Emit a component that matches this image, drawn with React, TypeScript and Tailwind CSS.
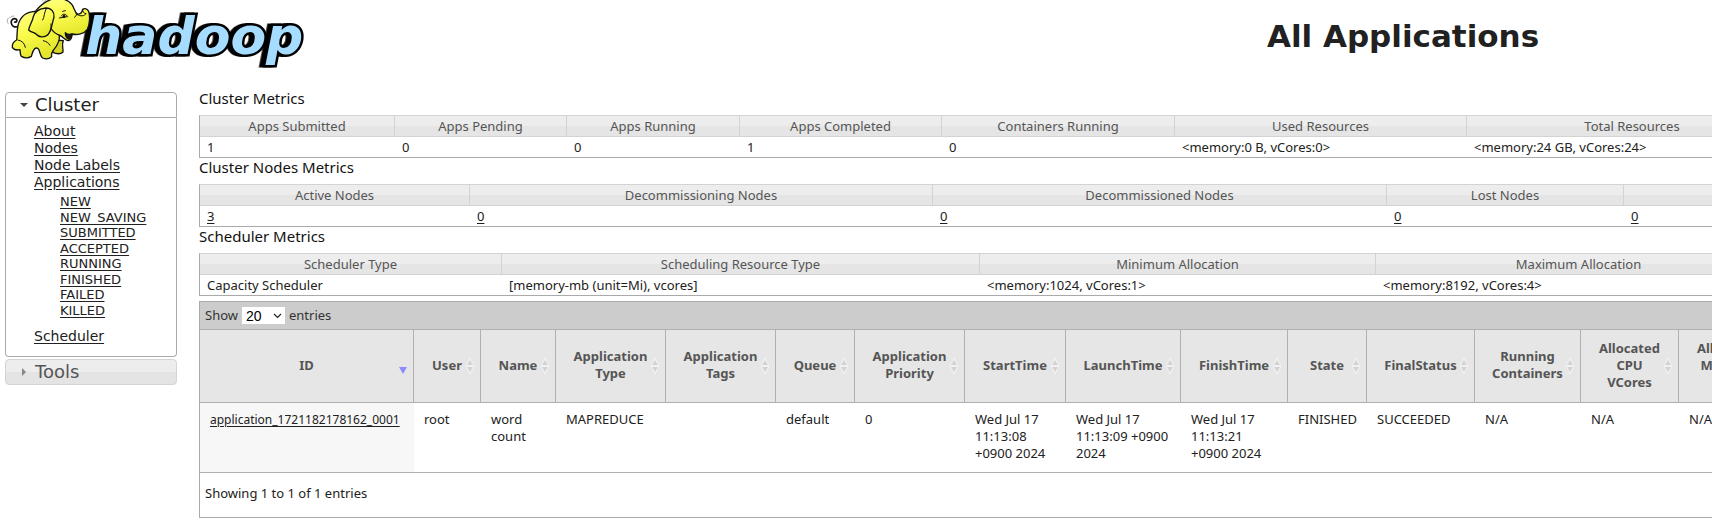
import type { ReactNode } from "react";

const BODY_FONT = "font-['Noto_Sans','Noto_Sans_CJK_KR',sans-serif]";
const NAV_FONT = "font-['DejaVu_Sans',sans-serif]";

function HadoopLogo() {
  return (
    <svg viewBox="0 0 930 210" className="h-[70px] w-[310px] shrink-0" role="img" aria-label="Hadoop">
      <defs>
        <linearGradient id="hide" x1="0" y1="0" x2="0.4" y2="1">
          <stop offset="0" stopColor="#ffff8a" />
          <stop offset="0.5" stopColor="#fbfb4e" />
          <stop offset="1" stopColor="#e3e62a" />
        </linearGradient>
      </defs>
      <text
        x="256"
        y="162"
        fill="#a5dcff"
        stroke="#000"
        strokeWidth="15"
        strokeLinejoin="miter"
        paintOrder="stroke"
        fontFamily="'DejaVu Sans', sans-serif"
        fontSize="156"
        fontWeight="700"
        fontStyle="italic"
        className="drop-shadow-[-11px_0_0_#000]"
      >
        hadoop
      </text>
      <g fill="url(#hide)" stroke="#111" strokeWidth="4" strokeLinejoin="round" strokeLinecap="round">
        <path d="M56 78C46 84 36 80 34 70C32 60 40 53 48 57C53 60 50 68 44 66" fill="none" strokeWidth="5" />
        <path d="M162 120L190 122C184 134 190 144 189 156C182 163 170 162 158 157Z" fill="#d3d424" />
        <path d="M104 34C78 36 60 52 54 76C50 94 52 108 50 120C42 124 36 132 37 142C42 150 52 151 60 149C61 158 60 164 64 169C73 174 86 174 94 169C97 160 98 152 104 146C110 142 114 144 117 150C121 162 122 170 128 174C137 178 148 176 155 170C153 162 157 154 162 148C172 136 180 124 178 106C172 66 140 36 104 34Z" />
        <path d="M108 32C122 14 140 2 160 -4C184 -8 206 0 216 14C222 22 224 36 232 42C240 44 246 38 248 28C254 24 262 26 266 34C270 48 270 72 262 88C252 102 232 106 216 102C216 112 212 121 204 122C196 120 190 112 180 106C166 102 158 94 152 84" />
        <path d="M196 98C202 104 210 104 216 102C215 112 211 118 205 117C199 113 196 106 196 98Z" fill="#1b1b12" />
        <path d="M138 24C116 26 104 36 100 50C98 64 88 76 86 90C94 98 102 96 108 102C116 112 132 114 144 104C156 90 156 68 162 52C164 36 154 24 138 24Z" />
        <path d="M138 28C132 38 134 50 128 60M142 104C152 98 154 86 153 72M54 120C66 122 74 130 76 142M130 122C138 124 146 128 150 136M248 28C247 36 252 40 258 41M228 42C238 48 248 50 256 44" fill="none" strokeWidth="3" />
        <path d="M184 48C188 40 196 41 202 48M178 54L202 50M188 34L196 32M224 52L230 44" fill="none" strokeWidth="3" />
        <ellipse cx="192" cy="49" rx="4" ry="5" fill="#111" stroke="none" />
        <path d="M24 70C20 62 22 56 28 52M32 52C34 49 38 48 42 48M130 8C134 2 138 0 142 -2M128 2L132 -2" fill="none" stroke="#777" strokeWidth="2" />
      </g>
    </svg>
  );
}

function NavLink({ children, className = "" }: { children: ReactNode; className?: string }) {
  return (
    <a href="#" className={`underline underline-offset-2 ${className}`}>
      {children}
    </a>
  );
}

const appStates = ["NEW", "NEW_SAVING", "SUBMITTED", "ACCEPTED", "RUNNING", "FINISHED", "FAILED", "KILLED"];

function Sidebar() {
  return (
    <nav className={`ml-[5px] mt-[22px] w-[172px] shrink-0 text-[#212121] ${NAV_FONT}`}>
      <button
        type="button"
        aria-expanded="true"
        className="flex h-[26px] w-full items-center gap-[7px] rounded-t-[4px] border border-[#aaaaaa] bg-white pl-[14px] text-[18px] leading-6"
      >
        <svg viewBox="0 0 8 8" className="size-2" aria-hidden="true">
          <path d="M0 2H8L4 6Z" fill="#454545" />
        </svg>
        Cluster
      </button>
      <div className="rounded-b-[4px] border border-t-0 border-[#aaaaaa] pb-[11px] pl-[28px] pt-[5px] text-[14px] leading-[17px]">
        <ul>
          <li><NavLink>About</NavLink></li>
          <li><NavLink>Nodes</NavLink></li>
          <li><NavLink>Node Labels</NavLink></li>
          <li>
            <NavLink>Applications</NavLink>
            <ul className="mb-[10px] mt-[3px] flex h-[124px] flex-col justify-between pl-[26px] text-[13px] leading-[15px]">
              {appStates.map((s) => (
                <li key={s}><NavLink>{s}</NavLink></li>
              ))}
            </ul>
          </li>
          <li><NavLink>Scheduler</NavLink></li>
        </ul>
      </div>
      <button
        type="button"
        aria-expanded="false"
        className="mt-[2px] flex h-[26px] w-full items-center gap-[7px] rounded-[4px] border border-[#d3d3d3] bg-linear-to-b from-[#ededed] from-50% to-[#e4e4e4] to-50% pl-[14px] text-[18px] leading-6 text-[#555555]"
      >
        <svg viewBox="0 0 8 8" className="size-2" aria-hidden="true">
          <path d="M2 0V8L6 4Z" fill="#888888" />
        </svg>
        Tools
      </button>
    </nav>
  );
}

type Metric = { label: string; value: string; width: string };

const clusterMetrics: Metric[] = [
  { label: "Apps Submitted", value: "1", width: "w-[195px]" },
  { label: "Apps Pending", value: "0", width: "w-[172px]" },
  { label: "Apps Running", value: "0", width: "w-[173px]" },
  { label: "Apps Completed", value: "1", width: "w-[202px]" },
  { label: "Containers Running", value: "0", width: "w-[233px]" },
  { label: "Used Resources", value: "<memory:0 B, vCores:0>", width: "w-[292px]" },
  { label: "Total Resources", value: "<memory:24 GB, vCores:24>", width: "w-[331px]" },
];

const nodeMetrics: Metric[] = [
  { label: "Active Nodes", value: "3", width: "w-[270px]" },
  { label: "Decommissioning Nodes", value: "0", width: "w-[463px]" },
  { label: "Decommissioned Nodes", value: "0", width: "w-[454px]" },
  { label: "Lost Nodes", value: "0", width: "w-[237px]" },
  { label: "", value: "0", width: "w-[174px]" },
];

const schedulerMetrics: Metric[] = [
  { label: "Scheduler Type", value: "Capacity Scheduler", width: "w-[302px]" },
  { label: "Scheduling Resource Type", value: "[memory-mb (unit=Mi), vcores]", width: "w-[478px]" },
  { label: "Minimum Allocation", value: "<memory:1024, vCores:1>", width: "w-[396px]" },
  { label: "Maximum Allocation", value: "<memory:8192, vCores:4>", width: "w-[406px]" },
];

function MetricsTable({ title, metrics, linked = false }: { title: string; metrics: Metric[]; linked?: boolean }) {
  return (
    <section>
      <h2 className="pb-2 text-[15px] leading-[18px] text-[#111111]">{title}</h2>
      <table className="w-full table-fixed border-separate border-spacing-0 border border-[#aaaaaa] border-t-[#d3d3d3] text-[13px] leading-5">
        <thead>
          <tr>
            {metrics.map((m) => (
              <th
                key={m.label}
                className={`h-[21px] border-b border-r border-[#d3d3d3] bg-linear-to-b from-[#ededed] from-50% to-[#e5e5e5] to-50% p-0 text-center font-normal text-[#555555] ${m.width}`}
              >
                {m.label}
              </th>
            ))}
          </tr>
        </thead>
        <tbody>
          <tr>
            {metrics.map((m) => (
              <td key={m.label} className="h-[20px] whitespace-nowrap py-0 pl-[7px] text-[#212121]">
                {linked ? <NavLink>{m.value}</NavLink> : m.value}
              </td>
            ))}
          </tr>
        </tbody>
      </table>
    </section>
  );
}

type Column = { label: string[]; value: string[]; width: string };

const columns: Column[] = [
  { label: ["ID"], value: ["application_1721182178162_0001"], width: "w-[214px]" },
  { label: ["User"], value: ["root"], width: "w-[67px]" },
  { label: ["Name"], value: ["word", "count"], width: "w-[75px]" },
  { label: ["Application", "Type"], value: ["MAPREDUCE"], width: "w-[110px]" },
  { label: ["Application", "Tags"], value: [""], width: "w-[110px]" },
  { label: ["Queue"], value: ["default"], width: "w-[79px]" },
  { label: ["Application", "Priority"], value: ["0"], width: "w-[110px]" },
  { label: ["StartTime"], value: ["Wed Jul 17", "11:13:08", "+0900 2024"], width: "w-[101px]" },
  { label: ["LaunchTime"], value: ["Wed Jul 17", "11:13:09 +0900", "2024"], width: "w-[115px]" },
  { label: ["FinishTime"], value: ["Wed Jul 17", "11:13:21", "+0900 2024"], width: "w-[107px]" },
  { label: ["State"], value: ["FINISHED"], width: "w-[79px]" },
  { label: ["FinalStatus"], value: ["SUCCEEDED"], width: "w-[108px]" },
  { label: ["Running", "Containers"], value: ["N/A"], width: "w-[106px]" },
  { label: ["Allocated", "CPU", "VCores"], value: ["N/A"], width: "w-[98px]" },
  { label: ["Allocated", "Memory", "MB"], value: ["N/A"], width: "w-[98px]" },
];

function Lines({ lines }: { lines: string[] }) {
  return (
    <>
      {lines.map((line) => (
        <span key={line} className="block">{line}</span>
      ))}
    </>
  );
}

function SortIcon({ active }: { active: boolean }) {
  return (
    <svg viewBox="0 0 10 18" className="absolute right-[5px] top-1/2 h-[18px] w-[10px] -translate-y-1/2" aria-hidden="true">
      {active ? (
        <path d="M1 10H9L5 17Z" fill="#8c8cff" />
      ) : (
        <>
          <path d="M5 0L9 8V10L5 18L1 10V8Z" fill="#f1f1f1" />
          <path d="M5 3L8 8H2ZM5 15L8 10H2Z" fill="#d3d3d3" />
        </>
      )}
    </svg>
  );
}

function ApplicationsTable() {
  return (
    <section className="mt-[5px] border border-r-0 border-[#aaaaaa] text-[13px]">
      <div className="flex h-[27px] items-center gap-1 bg-[#cccccc] pl-[5px] text-[#333333]">
        <label htmlFor="page-size">Show</label>
        <span className="relative flex">
          <select
            id="page-size"
            defaultValue="20"
            className="h-[17px] w-[43px] appearance-none bg-white pl-1 font-['Liberation_Sans',sans-serif] text-[14px] leading-4 text-black"
          >
            <option>20</option>
            <option>40</option>
            <option>60</option>
          </select>
          <svg viewBox="0 0 9 6" className="pointer-events-none absolute right-[3px] top-[6px] h-[6px] w-[9px]" aria-hidden="true">
            <path d="M1 1L4.5 4.5L8 1" fill="none" stroke="#222" strokeWidth="1.2" />
          </svg>
        </span>
        <span>entries</span>
      </div>
      <table className="w-full table-fixed border-separate border-spacing-0 border-y border-[#b0b0b0] leading-[17px]">
        <thead>
          <tr>
            {columns.map((c, i) => (
              <th
                key={c.label.join(" ")}
                aria-sort={i === 0 ? "descending" : "none"}
                className={`relative h-[73px] border-b border-r border-[#b0b0b0] bg-[#e6e6e6] p-0 pb-[2px] text-center font-bold text-[#555555] ${c.width}`}
              >
                <Lines lines={c.label} />
                <SortIcon active={i === 0} />
              </th>
            ))}
          </tr>
        </thead>
        <tbody>
          <tr>
            {columns.map((c, i) => (
              <td
                key={c.label.join(" ")}
                className="h-[69px] whitespace-nowrap py-2 pl-[10px] align-top text-[#212121] first:bg-[#f7f7f7]"
              >
                {i === 0 ? <NavLink className="text-[12px]">{c.value[0]}</NavLink> : <Lines lines={c.value} />}
              </td>
            ))}
          </tr>
        </tbody>
      </table>
      <p className="px-[5px] pb-[15px] pt-[11px] leading-[18px] text-[#212121]">Showing 1 to 1 of 1 entries</p>
    </section>
  );
}

export default function App() {
  return (
    <div className={`overflow-hidden bg-white ${BODY_FONT}`}>
      <header className="flex h-[70px] items-start">
        <HadoopLogo />
        <h1 className={`flex-1 pl-[784px] pt-[18px] text-center text-[31px] font-bold leading-9 whitespace-nowrap text-[#212121] ${NAV_FONT}`}>
          All Applications
        </h1>
      </header>
      <div className="flex items-start">
        <Sidebar />
        <main className="ml-[22px] mt-[19px] min-w-0 flex-1">
          <MetricsTable title="Cluster Metrics" metrics={clusterMetrics} />
          <MetricsTable title="Cluster Nodes Metrics" metrics={nodeMetrics} linked />
          <MetricsTable title="Scheduler Metrics" metrics={schedulerMetrics} />
          <ApplicationsTable />
        </main>
      </div>
    </div>
  );
}
